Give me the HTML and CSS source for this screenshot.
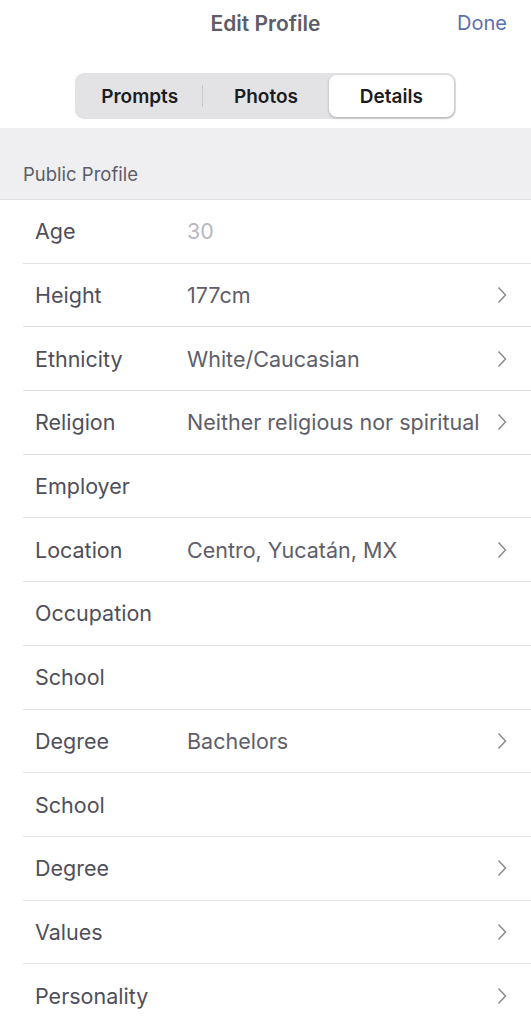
FILE: index.html
```html
<!DOCTYPE html>
<html lang="en">
<head>
  <meta charset="UTF-8">
  <title>Edit Profile</title>
  <link rel="stylesheet" href="styles.css">
</head>
<body>

  <div class="cabecera">
    <span class="titulo">Edit Profile</span>
    <span class="listo">Done</span>
  </div>

  <div class="segmentos">
    <div class="segmento">Prompts</div>
    <div class="divisor"></div>
    <div class="segmento">Photos</div>
    <div class="segmento activo">Details</div>
  </div>

  <div class="seccion">Public Profile</div>

  <div class="lista">
    <div class="fila"><span class="etiqueta">Age</span><span class="valor tenue">30</span></div>
    <div class="fila"><span class="etiqueta">Height</span><span class="valor">177cm</span><svg class="flecha" viewBox="0 0 10 18"><path d="M1.5 1.5 L8.5 9 L1.5 16.5"/></svg></div>
    <div class="fila"><span class="etiqueta">Ethnicity</span><span class="valor">White/Caucasian</span><svg class="flecha" viewBox="0 0 10 18"><path d="M1.5 1.5 L8.5 9 L1.5 16.5"/></svg></div>
    <div class="fila"><span class="etiqueta">Religion</span><span class="valor">Neither religious nor spiritual</span><svg class="flecha" viewBox="0 0 10 18"><path d="M1.5 1.5 L8.5 9 L1.5 16.5"/></svg></div>
    <div class="fila"><span class="etiqueta">Employer</span><span class="valor"></span></div>
    <div class="fila"><span class="etiqueta">Location</span><span class="valor">Centro, Yucatán, MX</span><svg class="flecha" viewBox="0 0 10 18"><path d="M1.5 1.5 L8.5 9 L1.5 16.5"/></svg></div>
    <div class="fila"><span class="etiqueta">Occupation</span><span class="valor"></span></div>
    <div class="fila"><span class="etiqueta">School</span><span class="valor"></span></div>
    <div class="fila"><span class="etiqueta">Degree</span><span class="valor">Bachelors</span><svg class="flecha" viewBox="0 0 10 18"><path d="M1.5 1.5 L8.5 9 L1.5 16.5"/></svg></div>
    <div class="fila"><span class="etiqueta">School</span><span class="valor"></span></div>
    <div class="fila"><span class="etiqueta">Degree</span><span class="valor"></span><svg class="flecha" viewBox="0 0 10 18"><path d="M1.5 1.5 L8.5 9 L1.5 16.5"/></svg></div>
    <div class="fila"><span class="etiqueta">Values</span><span class="valor"></span><svg class="flecha" viewBox="0 0 10 18"><path d="M1.5 1.5 L8.5 9 L1.5 16.5"/></svg></div>
    <div class="fila"><span class="etiqueta">Personality</span><span class="valor"></span><svg class="flecha" viewBox="0 0 10 18"><path d="M1.5 1.5 L8.5 9 L1.5 16.5"/></svg></div>
  </div>

</body>
</html>
```

FILE: styles.css
```css
body {
  margin: 0;
  font-family: Inter, "Liberation Sans", Arial, sans-serif;
  background-color: #fff;
  color: #5a5a66;
  overflow: hidden;
}

.cabecera {
  position: relative;
  height: 46px;
  display: flex;
  justify-content: center;
  align-items: center;
}

.titulo {
  font-size: 21px;
  font-weight: 600;
  color: #5d5d68;
}

.listo {
  position: absolute;
  right: 24px;
  top: 11px;
  font-size: 20px;
  color: #5b6fb0;
}

.segmentos {
  display: flex;
  align-items: center;
  width: 377px;
  height: 42px;
  margin: 27px 0 0 75px;
  padding: 2px;
  background-color: #e3e3e6;
  border-radius: 9px;
}

.segmento {
  flex: 1;
  height: 42px;
  display: flex;
  justify-content: center;
  align-items: center;
  font-size: 19px;
  font-weight: 600;
  color: #1c1c1e;
  border-radius: 8px;
}

.divisor {
  width: 1px;
  height: 22px;
  background-color: #c8c8cc;
}

.segmento.activo {
  background-color: #fff;
  box-shadow: 0 1px 3px rgba(0, 0, 0, 0.25);
}

.seccion {
  margin-top: 9px;
  height: 72px;
  box-sizing: border-box;
  padding: 35px 0 0 23px;
  background-color: #efeff1;
  border-bottom: 1px solid #e0e0e3;
  font-size: 18.5px;
  color: #5c5c68;
}

.lista {
  padding-left: 23px;
}

.fila {
  display: flex;
  align-items: center;
  height: 63.7px;
  box-sizing: border-box;
  border-bottom: 1px solid #e2e2e5;
  font-size: 21.5px;
}

.etiqueta {
  width: 152px;
  padding-left: 12px;
  color: #4f4f5b;
}

.valor {
  flex: 1;
  color: #5e5e6a;
}

.valor.tenue {
  color: #b8b8be;
}

.flecha {
  width: 10px;
  height: 18px;
  margin-right: 24px;
  fill: none;
  stroke: #85858e;
  stroke-width: 1.4;
}
```
